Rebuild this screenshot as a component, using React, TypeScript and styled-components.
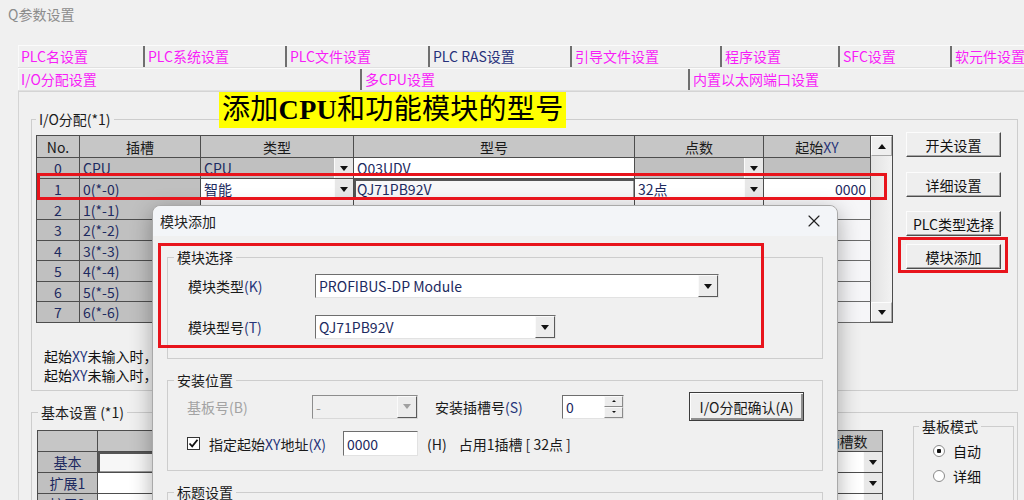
import React from 'react';
import styled, {createGlobalStyle} from 'styled-components';
import {X} from 'lucide-react';

const GlobalStyle = createGlobalStyle`
  * { box-sizing: border-box; }
  html, body { margin: 0; padding: 0; background: #f0f0f0; }
  body {
    font-family: "Noto Sans CJK SC", "Noto Sans", sans-serif;
    font-size: 14px;
    color: #1a1a1a;
  }
`;

type Kind = 'head' | 'gray' | 'white' | 'light' | 'inset';
type CellData = {text?: React.ReactNode; kind: Kind; align?: 'left' | 'center' | 'right'; drop?: boolean};

const topTabs = [
  {label: 'PLC名设置', w: 125},
  {label: 'PLC系统设置', w: 142},
  {label: 'PLC文件设置', w: 143},
  {label: 'PLC RAS设置', w: 142, color: '#27307a'},
  {label: '引导文件设置', w: 150},
  {label: '程序设置', w: 118},
  {label: 'SFC设置', w: 112},
  {label: '软元件设置', w: 130},
];

const frontTabs = [
  {label: 'I/O分配设置', w: 342},
  {label: '多CPU设置', w: 328},
  {label: '内置以太网端口设置', w: 340},
];

const ioCols = [43, 121, 153, 281, 129, 107];
const ioHeights = [21, 21, 20, 21, 20, 21, 20, 21];
const ioHead = ['No.', '插槽', '类型', '型号', '点数', <>起始<Lat>XY</Lat></>];

const ioRows: CellData[][] = [
  [
    {text: '0', kind: 'gray', align: 'center'},
    {text: 'CPU', kind: 'gray'},
    {text: 'CPU', kind: 'gray', drop: true},
    {text: 'Q03UDV', kind: 'white'},
    {kind: 'gray', drop: true},
    {kind: 'gray'},
  ],
  [
    {text: '1', kind: 'gray', align: 'center'},
    {text: '0(*-0)', kind: 'gray'},
    {text: '智能', kind: 'white', drop: true},
    {text: 'QJ71PB92V', kind: 'inset'},
    {text: '32点', kind: 'white', drop: true},
    {text: '0000', kind: 'white', align: 'right'},
  ],
  ...Array.from({length: 6}, (_, i): CellData[] => [
    {text: String(i + 2), kind: 'gray', align: 'center'},
    {text: `${i + 1}(*-${i + 1})`, kind: 'gray'},
    {kind: 'light'},
    {kind: 'light'},
    {kind: 'light'},
    {kind: 'light'},
  ]),
];

const baseCols = [60, 250, 250, 213, 72];
const baseHead = ['', '基板型号', '电源模块型号', '增设电缆型号', '插槽数'];
const baseRows = ['基本', '扩展1', '扩展2', '扩展3'];

function Lat({children}: {children: React.ReactNode}) {
  return <LatSpan>{children}</LatSpan>;
}

export default function App() {
  return (
    <Window>
      <GlobalStyle />
      <Caption>Q参数设置</Caption>

      <TabStrip>
        <TabRow>
          {topTabs.map((t, i) => (
            <Tab key={t.label} $w={t.w} $sep={i > 0} $color={t.color}>
              {t.label}
            </Tab>
          ))}
        </TabRow>
        <TabRow>
          {frontTabs.map((t, i) => (
            <Tab key={t.label} $w={t.w} $sep={i > 0}>
              {t.label}
            </Tab>
          ))}
        </TabRow>
      </TabStrip>

      <Panel>
        <IOGroup>
          <Legend>I/O分配(*1)</Legend>
          <IOTop>
            <IOTable>
              <Grid>
                <GridRow $h={22}>
                  {ioHead.map((h, i) => (
                    <Cell key={i} $w={ioCols[i]} $kind="head" $align="center">
                      <CellText>{h}</CellText>
                    </Cell>
                  ))}
                </GridRow>
                {ioRows.map((row, r) => (
                  <GridRow key={r} $h={ioHeights[r]}>
                    {row.map((c, i) => (
                      <Cell key={i} $w={ioCols[i]} $kind={c.kind} $align={c.align}>
                        <CellText>{c.text}</CellText>
                        {c.drop && <Drop />}
                      </Cell>
                    ))}
                  </GridRow>
                ))}
              </Grid>
              <ScrollBar>
                <ScrollBtn $up />
                <ScrollTrack />
                <ScrollBtn />
              </ScrollBar>
            </IOTable>
            <SideButtons>
              <WinButton $top={0}>开关设置</WinButton>
              <WinButton $top={15}>详细设置</WinButton>
              <WinButton $top={14}>PLC类型选择</WinButton>
              <WinButton $top={8}>模块添加</WinButton>
            </SideButtons>
          </IOTop>
          <Note>
            <div>起始<Lat>XY</Lat>未输入时，自动分配。</div>
            <div>起始<Lat>XY</Lat>未输入时，可能不同。</div>
          </Note>
        </IOGroup>

        <BasicGroup>
          <Legend>基本设置 (*1)</Legend>
          <BasicBody>
            <BaseTable>
              <GridRow $h={21}>
                {baseHead.map((h, i) => (
                  <Cell key={i} $w={baseCols[i]} $kind="head" $align="center">
                    <CellText>{h}</CellText>
                  </Cell>
                ))}
              </GridRow>
              {baseRows.map((label, r) => (
                <GridRow key={label} $h={21}>
                  {baseCols.map((w, i) =>
                    i === 0 ? (
                      <Cell key={i} $w={w} $kind="gray" $align="center">
                        <CellText>{label}</CellText>
                      </Cell>
                    ) : (
                      <Cell key={i} $w={w} $kind={r === 0 && i === 1 ? 'inset' : 'white'}>
                        <CellText />
                        {i === baseCols.length - 1 && <Drop />}
                      </Cell>
                    ),
                  )}
                </GridRow>
              ))}
            </BaseTable>
            <ModeGroup>
              <Legend>基板模式</Legend>
              <GroupBody $pl={19} $pt={6}>
                <RadioRow>
                  <Radio $on />
                  自动
                </RadioRow>
                <RadioRow>
                  <Radio />
                  详细
                </RadioRow>
              </GroupBody>
            </ModeGroup>
          </BasicBody>
        </BasicGroup>
      </Panel>

      <Dialog>
        <DialogTitle>
          <span>模块添加</span>
          <X size={20} strokeWidth={1.4} color="#222" />
        </DialogTitle>
        <DialogBody>
          <ModuleGroup>
            <Legend>模块选择</Legend>
            <GroupBody $pl={20} $pt={8}>
              <FormRow>
                <FormLabel $w={127}>模块类型<Lat>(K)</Lat></FormLabel>
                <Field $w={404}>
                  <FieldText>PROFIBUS-DP Module</FieldText>
                  <FieldDrop />
                </Field>
              </FormRow>
              <FormRow $gap={17}>
                <FormLabel $w={127}>模块型号<Lat>(T)</Lat></FormLabel>
                <Field $w={241}>
                  <FieldText>QJ71PB92V</FieldText>
                  <FieldDrop />
                </Field>
              </FormRow>
            </GroupBody>
          </ModuleGroup>

          <InstallGroup>
            <Legend>安装位置</Legend>
            <GroupBody $pl={19} $pt={3}>
              <FormRow $h={29}>
                <FormLabel $w={125} $muted>基板号(B)</FormLabel>
                <Field $w={106} $disabled>
                  <FieldText>-</FieldText>
                  <FieldDrop $muted />
                </Field>
                <FormLabel $w={127} $ml={17}>安装插槽号<Lat>(S)</Lat></FormLabel>
                <Field $w={62}>
                  <FieldText>0</FieldText>
                  <Spin>
                    <SpinBtn $up />
                    <SpinBtn />
                  </Spin>
                </Field>
                <ConfirmButton>I/O分配确认(A)</ConfirmButton>
              </FormRow>
              <FormRow $h={25} $gap={10}>
                <Check>
                  <svg width="11" height="11" viewBox="0 0 11 11">
                    <path d="M1.5 5.5 L4.2 8.3 L9.5 1.8" fill="none" stroke="#111" strokeWidth="1.8" />
                  </svg>
                </Check>
                <FormLabel $w={134}>指定起始<Lat>XY</Lat>地址<Lat>(X)</Lat></FormLabel>
                <Field $w={75} $h={25}>
                  <FieldText>0000</FieldText>
                </Field>
                <FormLabel $ml={9}>(H)</FormLabel>
                <FormLabel $ml={12}>占用1插槽 [ 32点 ]</FormLabel>
              </FormRow>
            </GroupBody>
          </InstallGroup>

          <TitleGroup>
            <Legend>标题设置</Legend>
          </TitleGroup>
        </DialogBody>
      </Dialog>

      <Callout>添加<b>CPU</b>和功能模块的型号</Callout>

      <Highlight $x={37} $y={173} $w={850} $h={27} />
      <Highlight $x={898} $y={237} $w={110} $h={36} />
      <Highlight $x={158} $y={243} $w={606} $h={105} />
    </Window>
  );
}

const Window = styled.div`
  position: relative;
  width: 1024px;
  height: 500px;
  overflow: hidden;
  background: #f0f0f0;
`;

const LatSpan = styled.span`
  color: #26357a;
`;

const Caption = styled.div`
  height: 30px;
  padding: 4px 0 0 8px;
  font-size: 14px;
  line-height: 20px;
  color: #8c8c8c;
`;

const TabStrip = styled.div`
  margin: 15px 0 0 18px;
`;

const TabRow = styled.div`
  display: flex;
  height: 23px;
  border-top: 1px solid #fbfbfb;
  border-bottom: 1px solid #e0e0e0;
`;

const Tab = styled.div<{$w: number; $sep?: boolean; $color?: string}>`
  flex: 0 0 ${p => p.$w}px;
  padding-left: ${p => (p.$sep ? 3 : 2)}px;
  border-left: ${p => (p.$sep ? '2px solid #6f6f6f' : '1px solid #fafafa')};
  font-size: 14px;
  line-height: 21px;
  white-space: nowrap;
  color: ${p => p.$color ?? '#f81cf8'};
`;

const Panel = styled.div`
  margin-left: 18px;
  height: 409px;
  border-left: 1px solid #d4d4d4;
  border-top: 1px solid #d4d4d4;
  padding: 0 6px 0 12px;
`;

const Group = styled.fieldset`
  margin: 0;
  padding: 0;
  min-width: 0;
  border: 1px solid #cdcdcd;
`;

const GroupBody = styled.div<{$pl: number; $pt?: number}>`
  padding: ${p => p.$pt ?? 0}px 0 0 ${p => p.$pl}px;
`;

const Legend = styled.legend`
  margin-left: 6px;
  padding: 0 3px;
  font-size: 14px;
  line-height: 18px;
  color: #1a1a1a;
`;

const IOGroup = styled(Group)`
  margin-top: 18px;
  padding: 7px 0 5px 4px;

  & > legend {
    margin-left: 0;
  }
`;

const IOTop = styled.div`
  display: flex;
  align-items: flex-start;
`;

const IOTable = styled.div`
  display: flex;
`;

const Grid = styled.div`
  border-top: 1px solid #4d4d4d;
  border-left: 1px solid #4d4d4d;
`;

const GridRow = styled.div<{$h: number}>`
  display: flex;
  height: ${p => p.$h}px;
`;

const cellBg: Record<Kind, string> = {
  head: '#c6c6c6',
  gray: '#c0c0c0',
  white: '#ffffff',
  light: '#f6f6f8',
  inset: '#f7f7f7',
};

const Cell = styled.div<{$w: number; $kind: Kind; $align?: 'left' | 'center' | 'right'}>`
  flex: 0 0 ${p => p.$w}px;
  display: flex;
  align-items: stretch;
  background: ${p => cellBg[p.$kind]};
  border-right: 1px solid #4d4d4d;
  border-bottom: 1px solid ${p => (p.$kind === 'light' ? '#6a6a6a' : '#4d4d4d')};
  box-shadow: ${p => (p.$kind === 'inset' ? 'inset 2px 2px 0 #555, inset -1px -1px 0 #9a9a9a' : 'none')};
  font-size: 14px;
  color: ${p => (p.$kind === 'head' ? '#1a1a1a' : '#1d2a60')};
  white-space: nowrap;
  overflow: hidden;
  justify-content: ${p => (p.$align === 'center' ? 'center' : p.$align === 'right' ? 'flex-end' : 'flex-start')};

  & > span:first-child {
    flex: ${p => (p.$align ? '0 0 auto' : '1 1 auto')};
    padding: ${p => (p.$align === 'right' ? '0 4px 0 0' : p.$align === 'center' ? '0' : '0 0 0 3px')};
  }
`;

const CellText = styled.span`
  display: flex;
  align-items: center;
  line-height: 1;
`;

const Drop = styled.span<{$muted?: boolean}>`
  flex: 0 0 19px;
  display: flex;
  align-items: center;
  justify-content: center;
  background: #e8e8e8;
  border-left: 1px solid #fbfbfb;

  &::after {
    content: '';
    border-left: 4px solid transparent;
    border-right: 4px solid transparent;
    border-top: 5px solid ${p => (p.$muted ? '#a0a0a0' : '#111')};
  }
`;

const ScrollBar = styled.div`
  width: 22px;
  display: flex;
  flex-direction: column;
  border: 1px solid #4d4d4d;
  border-left: none;
  background: #e6e6e6;
`;

const ScrollBtn = styled.div<{$up?: boolean}>`
  height: 20px;
  display: flex;
  align-items: center;
  justify-content: center;
  background: #efefef;
  border: 1px solid;
  border-color: #fdfdfd #a8a8a8 #a8a8a8 #fdfdfd;

  &::after {
    content: '';
    border-left: 4px solid transparent;
    border-right: 4px solid transparent;
    ${p => (p.$up ? 'border-bottom: 5px solid #111;' : 'border-top: 5px solid #111;')}
  }
`;

const ScrollTrack = styled.div`
  flex: 1;
  background: linear-gradient(90deg, #e2e2e2, #f2f2f2);
`;

const SideButtons = styled.div`
  margin: -3px 0 0 13px;
  display: flex;
  flex-direction: column;
`;

const WinButton = styled.button<{$top: number}>`
  margin-top: ${p => p.$top}px;
  width: 95px;
  height: 25px;
  padding: 0;
  font-family: inherit;
  font-size: 14px;
  color: #111;
  background: #eeeeee;
  border: 1px solid;
  border-color: #fcfcfc #4c4c4c #4c4c4c #fcfcfc;
  box-shadow: inset -1px -1px 0 #a6a6a6;
  white-space: nowrap;
`;

const Note = styled.div`
  margin: 24px 0 0 8px;
  width: 120px;
  overflow: hidden;
  font-size: 14px;
  line-height: 19px;
  color: #111;
  white-space: nowrap;
`;

const BasicGroup = styled(Group)`
  margin-top: 12px;
  padding: 0 0 0 5px;
  height: 120px;

  & > legend {
    margin-left: 1px;
  }
`;

const BasicBody = styled.div`
  display: flex;
  align-items: flex-start;
`;

const BaseTable = styled(Grid)`
  margin-top: 9px;
`;

const ModeGroup = styled(Group)`
  margin: -4px 0 0 30px;
  width: 101px;
  height: 90px;

  & > legend {
    margin-left: 5px;
  }
`;

const RadioRow = styled.div`
  display: flex;
  align-items: center;
  gap: 8px;
  height: 20px;
  margin-bottom: 5px;
  font-size: 14px;
  color: #111;
`;

const Radio = styled.span<{$on?: boolean}>`
  width: 12px;
  height: 12px;
  border-radius: 50%;
  border: 1px solid #8a8a8a;
  background: radial-gradient(circle, ${p => (p.$on ? '#111 0 2px' : '#fff 0 2px')}, #fff 2.5px);
`;

const Dialog = styled.div`
  position: absolute;
  left: 152px;
  top: 205px;
  width: 686px;
  height: 320px;
  background: #f0f0f0;
  border: 1px solid #a9a9a9;
  border-radius: 8px 8px 0 0;
  box-shadow: 0 6px 22px rgba(0, 0, 0, 0.32);
`;

const DialogTitle = styled.div`
  height: 30px;
  display: flex;
  align-items: center;
  justify-content: space-between;
  padding: 0 13px 0 7px;
  background: #f3f5f8;
  border-radius: 8px 8px 0 0;
  font-size: 14px;
  color: #222;
`;

const DialogBody = styled.div`
  padding: 12px 14px 0 14px;
`;

const ModuleGroup = styled(Group)`
  padding-bottom: 19px;
`;

const InstallGroup = styled(Group)`
  margin-top: 12px;
  padding-bottom: 14px;
`;

const TitleGroup = styled(Group)`
  margin-top: 12px;
  height: 60px;
`;

const FormRow = styled.div<{$h?: number; $gap?: number}>`
  display: flex;
  align-items: center;
  height: ${p => p.$h ?? 24}px;
  margin-top: ${p => p.$gap ?? 0}px;
`;

const FormLabel = styled.span<{$w?: number; $ml?: number; $muted?: boolean}>`
  ${p => (p.$w ? `flex: 0 0 ${p.$w}px;` : '')}
  margin-left: ${p => p.$ml ?? 0}px;
  font-size: 14px;
  white-space: nowrap;
  color: ${p => (p.$muted ? '#a3a3a3' : '#1a1a1a')};

  & > span {
    color: ${p => (p.$muted ? '#a3a3a3' : '#26357a')};
  }
`;

const Field = styled.div<{$w: number; $h?: number; $disabled?: boolean}>`
  flex: 0 0 ${p => p.$w}px;
  height: ${p => p.$h ?? 24}px;
  display: flex;
  align-items: stretch;
  background: ${p => (p.$disabled ? '#f0f0f0' : '#ffffff')};
  border: 1px solid;
  border-color: ${p => (p.$disabled ? '#8d8d8d #d9d9d9 #d9d9d9 #8d8d8d' : '#6e6e6e #e2e2e2 #e2e2e2 #6e6e6e')};
  font-size: 14px;
  color: ${p => (p.$disabled ? '#9a9a9a' : '#1d2a60')};
`;

const FieldText = styled.span`
  flex: 1;
  display: flex;
  align-items: center;
  padding-left: 3px;
  white-space: nowrap;
`;

const FieldDrop = styled(Drop)`
  flex-basis: 20px;
  border: 1px solid;
  border-color: #fafafa #5a5a5a #5a5a5a #fafafa;
  background: #ececec;
`;

const Spin = styled.div`
  flex: 0 0 19px;
  display: flex;
  flex-direction: column;
`;

const SpinBtn = styled.span<{$up?: boolean}>`
  flex: 1;
  display: flex;
  align-items: center;
  justify-content: center;
  background: #ececec;
  border: 1px solid;
  border-color: #fafafa #8a8a8a #8a8a8a #fafafa;

  &::after {
    content: '';
    border-left: 2px solid transparent;
    border-right: 2px solid transparent;
    ${p => (p.$up ? 'border-bottom: 2px solid #111;' : 'border-top: 2px solid #111;')}
  }
`;

const ConfirmButton = styled.button`
  margin-left: 65px;
  width: 115px;
  height: 29px;
  padding: 0;
  font-family: inherit;
  font-size: 14px;
  color: #1a1a1a;
  background: #eeeeee;
  border: 1px solid #3c3c3c;
  box-shadow: inset 1px 1px 0 #fdfdfd, inset -2px -2px 0 #8e8e8e;
  white-space: nowrap;
`;

const Check = styled.span`
  flex: 0 0 13px;
  height: 13px;
  margin-right: 9px;
  display: flex;
  align-items: center;
  justify-content: center;
  background: #fff;
  border: 1px solid #333;
`;

const Callout = styled.div`
  position: absolute;
  left: 219px;
  top: 92px;
  height: 36px;
  padding: 0 3px;
  background: #ffff00;
  font-family: "Liberation Serif", "Noto Sans CJK SC", serif;
  font-size: 28px;
  line-height: 36px;
  letter-spacing: 0.3px;
  color: #000;
  white-space: nowrap;

  & b {
    font-weight: 700;
  }
`;

const Highlight = styled.div<{$x: number; $y: number; $w: number; $h: number}>`
  position: absolute;
  left: ${p => p.$x}px;
  top: ${p => p.$y}px;
  width: ${p => p.$w}px;
  height: ${p => p.$h}px;
  border: 3px solid #e8141c;
  pointer-events: none;
`;
